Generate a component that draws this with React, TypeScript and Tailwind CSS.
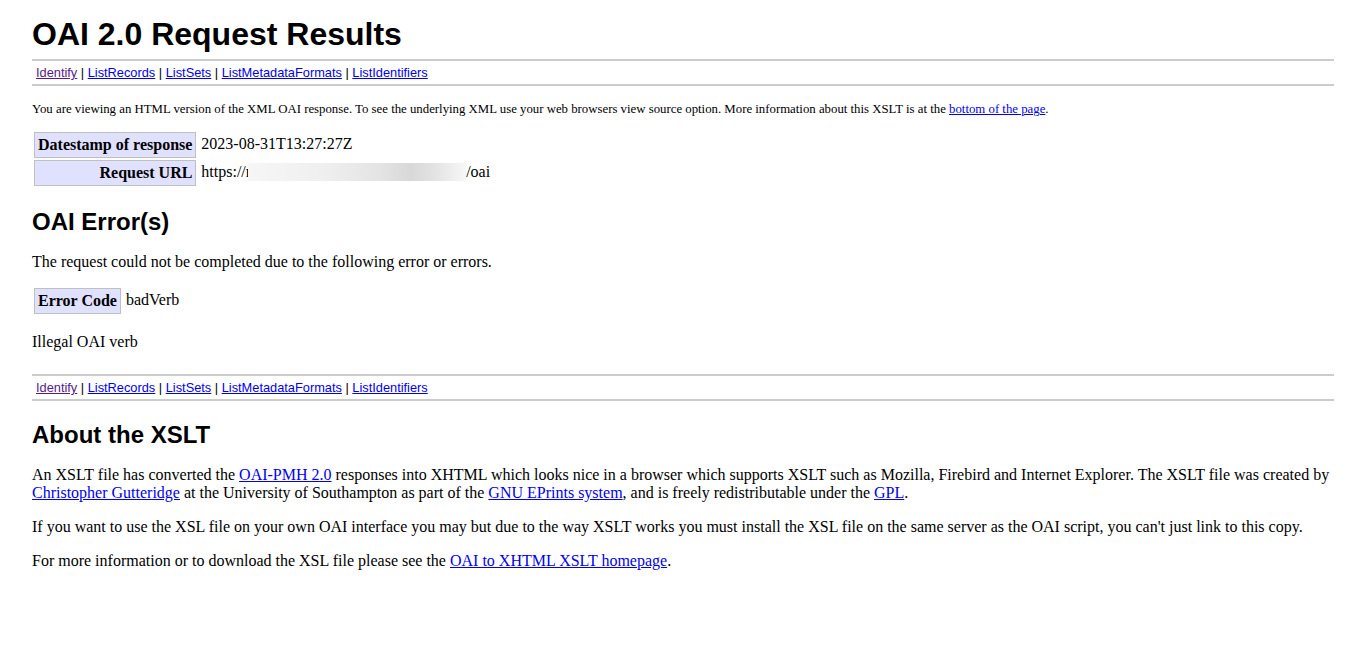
const quickLinks = [
  { label: "Identify", visited: true },
  { label: "ListRecords" },
  { label: "ListSets" },
  { label: "ListMetadataFormats" },
  { label: "ListIdentifiers" },
];

function QuickLinks({ className = "" }: { className?: string }) {
  return (
    <div
      className={`border-y-2 border-[#cccccc] pl-[4px] pt-[4px] pb-[4px] font-['Liberation_Sans',Arial,sans-serif] text-[12.8px] leading-[15px] ${className}`}
    >
      {quickLinks.map((link, idx) => (
        <span key={link.label}>
          {idx > 0 && " | "}
          <a
            href="#"
            className={`underline ${link.visited ? "text-[#551a8b]" : "text-[#0000ee]"}`}
          >
            {link.label}
          </a>
        </span>
      ))}
    </div>
  );
}

function KeyCell({ children }: { children: React.ReactNode }) {
  return (
    <td className="whitespace-nowrap border border-[#c0c0c0] bg-[#e0e0ff] p-[3px] text-right align-top font-bold">
      {children}
    </td>
  );
}

function ValueCell({ children }: { children: React.ReactNode }) {
  return <td className="p-[3px] align-top whitespace-nowrap">{children}</td>;
}

const Link = ({ children }: { children: React.ReactNode }) => (
  <a href="#" className="text-[#0000ee] underline">
    {children}
  </a>
);

export default function App() {
  return (
    <div className="flex min-h-[651px] flex-col bg-white px-[32px] pt-[16px] font-['Liberation_Serif','Times_New_Roman',serif] text-[16px] leading-[18px] text-black">
      <h1 className="font-['Liberation_Sans',Arial,sans-serif] text-[32px] leading-[36px] font-bold">
        OAI 2.0 Request Results
      </h1>
      <QuickLinks className="mt-[7px]" />

      <p className="mt-[16px] text-[12.8px] leading-[15px]">
        You are viewing an HTML version of the XML OAI response. To see the underlying XML use
        your web browsers view source option. More information about this XSLT is at the{" "}
        <Link>bottom of the page</Link>.
      </p>

      {/* response info */}
      <table className="mt-[13px] self-start border-separate border-spacing-[2px]">
        <tbody>
          <tr>
            <KeyCell>Datestamp of response</KeyCell>
            <ValueCell>2023-08-31T13:27:27Z</ValueCell>
          </tr>
          <tr>
            <KeyCell>Request URL</KeyCell>
            <ValueCell>
              https://r
              <span className="ml-[-3px] inline-block h-[18px] w-[218px] align-top bg-[linear-gradient(90deg,#f6f6f6_0%,#efefef_35%,#e4e4e4_60%,#d8d8d8_75%,#e6e6e6_88%,#f7f7f7_100%)]" />
              /oai
            </ValueCell>
          </tr>
        </tbody>
      </table>

      <h2 className="mt-[20px] font-['Liberation_Sans',Arial,sans-serif] text-[24px] leading-[27px] font-bold">
        OAI Error(s)
      </h2>
      <p className="mt-[18px]">The request could not be completed due to the following error or errors.</p>
      <table className="mt-[15px] self-start border-separate border-spacing-[2px]">
        <tbody>
          <tr>
            <KeyCell>Error Code</KeyCell>
            <ValueCell>badVerb</ValueCell>
          </tr>
        </tbody>
      </table>
      <p className="mt-[17px]">Illegal OAI verb</p>

      <QuickLinks className="mt-[23px]" />

      {/* about */}
      <h2 className="mt-[20px] font-['Liberation_Sans',Arial,sans-serif] text-[24px] leading-[27px] font-bold">
        About the XSLT
      </h2>
      <p className="mt-[18px]">
        An XSLT file has converted the <Link>OAI-PMH 2.0</Link> responses into XHTML which looks
        nice in a browser which supports XSLT such as Mozilla, Firebird and Internet Explorer. The
        XSLT file was created by <Link>Christopher Gutteridge</Link> at the University of
        Southampton as part of the <Link>GNU EPrints system</Link>, and is freely redistributable
        under the <Link>GPL</Link>.
      </p>
      <p className="mt-[16px]">
        If you want to use the XSL file on your own OAI interface you may but due to the way XSLT
        works you must install the XSL file on the same server as the OAI script, you can't just
        link to this copy.
      </p>
      <p className="mt-[16px]">
        For more information or to download the XSL file please see the{" "}
        <Link>OAI to XHTML XSLT homepage</Link>.
      </p>
    </div>
  );
}
